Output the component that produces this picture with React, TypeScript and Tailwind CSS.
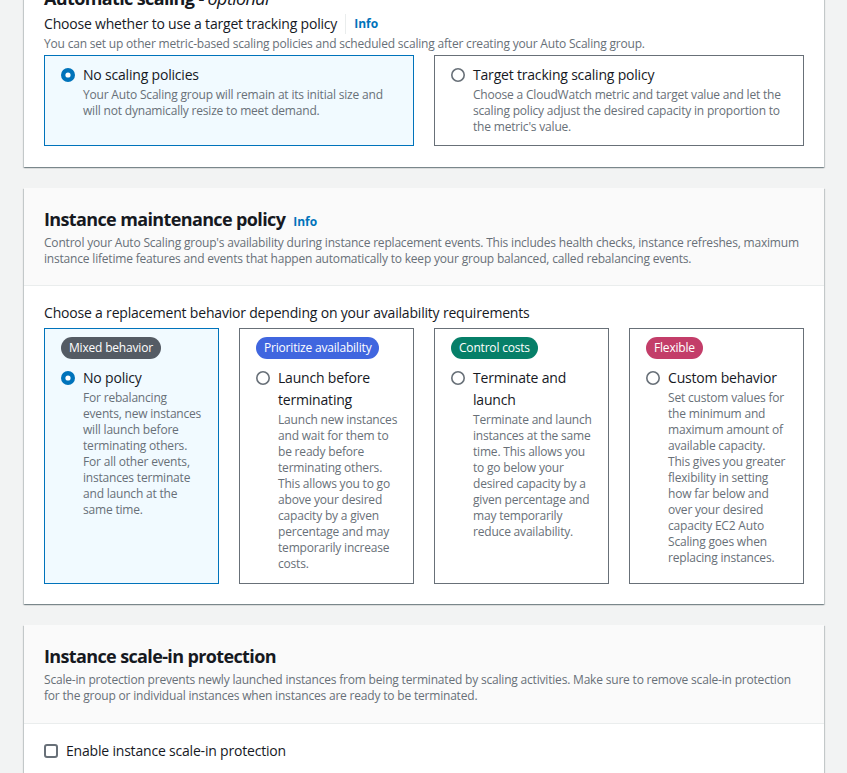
import React from "react";

const font = { fontFamily: '"Open Sans", "Noto Sans", Arial, sans-serif' };

function Radio({ checked }: { checked: boolean }) {
    return (
        <svg width="14" height="14" viewBox="0 0 14 14" className="shrink-0">
            {checked ? (
                <>
                    <circle cx="7" cy="7" r="7" fill="#0073bb" />
                    <circle cx="7" cy="7" r="2.6" fill="#ffffff" />
                </>
            ) : (
                <circle cx="7" cy="7" r="6.2" fill="#ffffff" stroke="#687078" strokeWidth="1.6" />
            )}
        </svg>
    );
}

function Info() {
    return <span className="text-[12px] leading-4 font-bold tracking-normal text-[#0073bb]">Info</span>;
}

function Card({ children }: { children: React.ReactNode }) {
    return (
        <div className="w-[800px] bg-white shadow-[0_1px_1px_0_rgba(0,28,36,0.3),1px_1px_1px_0_rgba(0,28,36,0.15),-1px_1px_1px_0_rgba(0,28,36,0.15)]">
            {children}
        </div>
    );
}

const behaviors = [
    {
        badge: "Mixed behavior",
        badgeBg: "bg-[#545b64]",
        title: "No policy",
        desc: "For rebalancing events, new instances will launch before terminating others. For all other events, instances terminate and launch at the same time.",
        checked: true,
    },
    {
        badge: "Prioritize availability",
        badgeBg: "bg-[#4066df]",
        title: "Launch before terminating",
        desc: "Launch new instances and wait for them to be ready before terminating others. This allows you to go above your desired capacity by a given percentage and may temporarily increase costs.",
        checked: false,
    },
    {
        badge: "Control costs",
        badgeBg: "bg-[#067f68]",
        title: "Terminate and launch",
        desc: "Terminate and launch instances at the same time. This allows you to go below your desired capacity by a given percentage and may temporarily reduce availability.",
        checked: false,
    },
    {
        badge: "Flexible",
        badgeBg: "bg-[#c33d69]",
        title: "Custom behavior",
        desc: "Set custom values for the minimum and maximum amount of available capacity. This gives you greater flexibility in setting how far below and over your desired capacity EC2 Auto Scaling goes when replacing instances.",
        checked: false,
    },
];

export default function App() {
    return (
        <div className="h-[773px] overflow-hidden bg-[#f2f3f3] tracking-[-0.012em] text-[#16191f]" style={font}>
            <div className="-mt-[33px] flex flex-col gap-[21px] pl-6">
                {/* automatic scaling */}
                <Card>
                    <div className="px-5 pt-5 pb-[21px]">
                        <h2 className="h-[22px] text-[18px] font-bold leading-[22px] tracking-[-0.035em]">
                            Automatic scaling - <i className="font-normal">optional</i>
                        </h2>
                        <div className="mt-[5px] flex h-5 items-center text-[14px] leading-5">
                            <span>Choose whether to use a target tracking policy</span>
                            <span className="mx-2 h-5 w-px bg-[#eaeded]" />
                            <Info />
                        </div>
                        <p className="mt-[2px] text-[12px] leading-4 text-[#687078]">
                            You can set up other metric-based scaling policies and scheduled scaling after creating your Auto Scaling group.
                        </p>
                        <div className="mt-[3px] grid grid-cols-2 gap-5">
                            <div className="flex gap-2 border border-[#0073bb] bg-[#f1faff] pl-4 pr-3 pt-[9px] pb-[10px]">
                                <div className="mt-[3px]"><Radio checked /></div>
                                <div>
                                    <div className="text-[14px] leading-5">No scaling policies</div>
                                    <div className="mt-[2px] text-[12px] leading-4 text-[#687078]">
                                        Your Auto Scaling group will remain at its initial size and will not dynamically resize to meet demand.
                                    </div>
                                </div>
                            </div>
                            <div className="flex gap-2 border border-[#687078] bg-white pl-4 pr-3 pt-[9px] pb-[10px]">
                                <div className="mt-[3px]"><Radio checked={false} /></div>
                                <div>
                                    <div className="text-[14px] leading-5">Target tracking scaling policy</div>
                                    <div className="mt-[2px] text-[12px] leading-4 text-[#687078]">
                                        Choose a CloudWatch metric and target value and let the scaling policy adjust the desired capacity in proportion to the metric's value.
                                    </div>
                                </div>
                            </div>
                        </div>
                    </div>
                </Card>

                {/* instance maintenance policy */}
                <Card>
                    <div className="border-b border-[#eaeded] bg-[#fafafa] px-5 pt-5 pb-[18px]">
                        <h2 className="flex h-[22px] items-baseline gap-2 text-[18px] font-bold leading-[22px]">
                            <span className="tracking-[-0.035em]">Instance maintenance policy</span>
                            <Info />
                        </h2>
                        <p className="mt-[5px] text-[12px] leading-4 text-[#687078]">
                            Control your Auto Scaling group's availability during instance replacement events. This includes health checks, instance refreshes, maximum instance lifetime features and events that happen automatically to keep your group balanced, called rebalancing events.
                        </p>
                    </div>
                    <div className="px-5 pt-[17px] pb-5">
                        <div className="text-[14px] leading-5">Choose a replacement behavior depending on your availability requirements</div>
                        <div className="mt-[5px] grid grid-cols-4 gap-5">
                            {behaviors.map((b) => (
                                <div
                                    key={b.title}
                                    className={`flex flex-col border pl-4 pr-4 pt-[8px] pb-[11px] ${b.checked ? "border-[#0073bb] bg-[#f1faff]" : "border-[#687078] bg-white"}`}
                                >
                                    <span className={`self-start rounded-full px-2 text-[12px] leading-[22px] text-white ${b.badgeBg}`}>
                                        {b.badge}
                                    </span>
                                    <div className="mt-2 flex gap-2">
                                        <div className="mt-[4px]"><Radio checked={b.checked} /></div>
                                        <div className="-mr-[2px]">
                                            <div className="text-[14px] leading-[22px]">{b.title}</div>
                                            <div className="mt-px text-[12px] leading-4 text-[#687078]">{b.desc}</div>
                                        </div>
                                    </div>
                                </div>
                            ))}
                        </div>
                    </div>
                </Card>

                {/* scale-in protection */}
                <Card>
                    <div className="border-b border-[#eaeded] bg-[#fafafa] px-5 pt-5 pb-[19px]">
                        <h2 className="h-[22px] text-[18px] font-bold leading-[22px] tracking-[-0.035em]">Instance scale-in protection</h2>
                        <p className="mt-[5px] text-[12px] leading-4 text-[#687078]">
                            Scale-in protection prevents newly launched instances from being terminated by scaling activities. Make sure to remove scale-in protection for the group or individual instances when instances are ready to be terminated.
                        </p>
                    </div>
                    <div className="px-5 pt-[17px] pb-5">
                        <label className="flex items-center gap-2 text-[14px] leading-5">
                            <span className="h-[14px] w-[14px] rounded-[3px] border-2 border-[#687078] bg-white" />
                            Enable instance scale-in protection
                        </label>
                    </div>
                </Card>
            </div>
        </div>
    );
}
